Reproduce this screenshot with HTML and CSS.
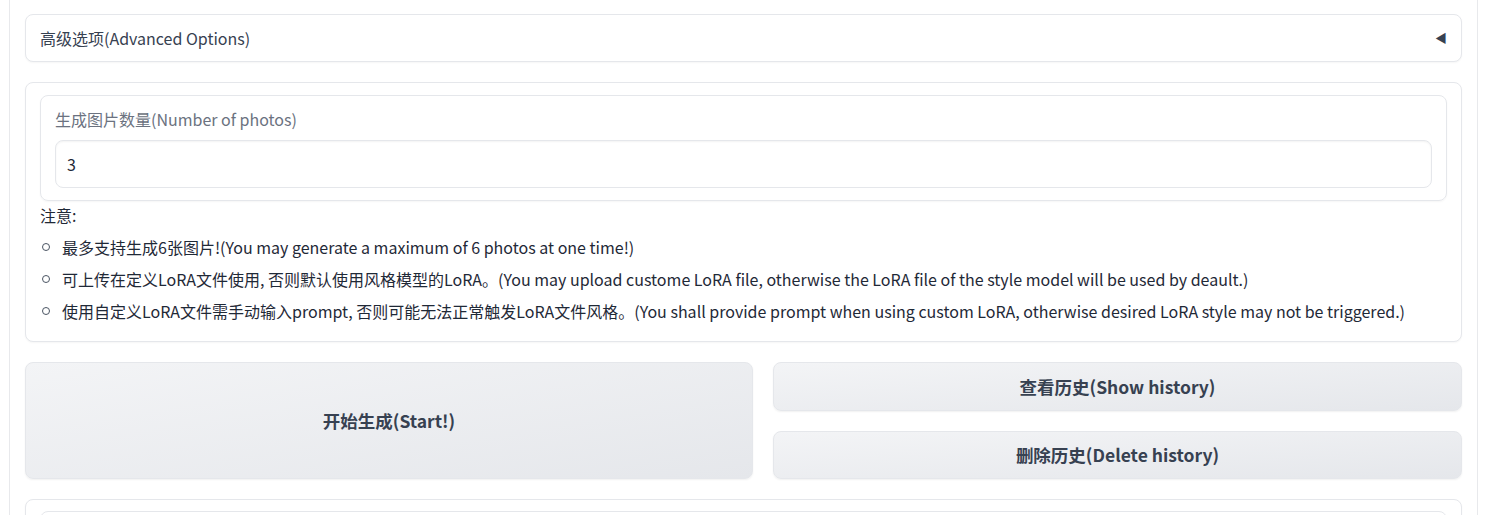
FILE: index.html
```html
<!DOCTYPE html>
<html lang="zh">
<head>
<meta charset="utf-8">
<title>Options</title>
<link rel="stylesheet" href="styles.css">
</head>
<body>
<div class="wrap">
  <div class="accordion">
    <span class="acc-title">高级选项(Advanced Options)</span>
    <span class="acc-arrow">◀</span>
  </div>

  <div class="panel">
    <div class="block">
      <div class="label">生成图片数量(Number of photos)</div>
      <div class="input">3</div>
    </div>
    <div class="prose">
      <p class="note">注意:</p>
      <ul class="notes">
        <li>最多支持生成6张图片!(You may generate a maximum of 6 photos at one time!)</li>
        <li>可上传在定义LoRA文件使用, 否则默认使用风格模型的LoRA。(You may upload custome LoRA file, otherwise the LoRA file of the style model will be used by deault.)</li>
        <li>使用自定义LoRA文件需手动输入prompt, 否则可能无法正常触发LoRA文件风格。(You shall provide prompt when using custom LoRA, otherwise desired LoRA style may not be triggered.)</li>
      </ul>
    </div>
  </div>

  <div class="actions">
    <button class="btn btn-start">开始生成(Start!)</button>
    <div class="side">
      <button class="btn">查看历史(Show history)</button>
      <button class="btn">删除历史(Delete history)</button>
    </div>
  </div>

  <div class="panel panel-next">
    <div class="block block-next"></div>
  </div>
</div>
</body>
</html>
```

FILE: styles.css
```css
* { box-sizing: border-box; }

html, body {
  margin: 0;
  padding: 0;
  background: #ffffff;
  height: 515px;
  overflow: hidden;
}

body {
  font-family: "Noto Sans CJK SC", "Noto Sans", sans-serif;
  font-size: 16px;
  color: #374151;
}

.wrap {
  margin-left: 9px;
  width: 1469px;
  min-height: 700px;
  border-left: 1px solid #e8e9ec;
  border-right: 1px solid #e8e9ec;
  padding: 14px 15px 0 15px;
  display: flex;
  flex-direction: column;
  gap: 20px;
}

.accordion {
  height: 48px;
  border: 1px solid #e5e7eb;
  border-radius: 8px;
  box-shadow: 0 1px 2px rgba(0,0,0,0.04);
  display: flex;
  align-items: center;
  justify-content: space-between;
  padding: 0 14px 0 14px;
  background: #fff;
}

.acc-title {
  font-size: 16px;
  color: #374151;
}

.acc-arrow {
  font-size: 12px;
  color: #374151;
  line-height: 1;
}

.panel {
  border: 1px solid #e5e7eb;
  border-radius: 8px;
  box-shadow: 0 1px 2px rgba(0,0,0,0.04);
  padding: 12px 14px 12px 14px;
  background: #fff;
}

.block {
  border: 1px solid #e5e7eb;
  border-radius: 8px;
  box-shadow: 0 1px 2px rgba(0,0,0,0.04);
  padding: 12px 14px 12px 14px;
  display: flex;
  flex-direction: column;
  gap: 10px;
}

.label {
  line-height: 22px;
  color: #6b7280;
  font-size: 16px;
}

.input {
  height: 48px;
  border: 1px solid #e5e7eb;
  border-radius: 8px;
  box-shadow: inset 0 1px 2px rgba(0,0,0,0.05);
  padding: 0 11px;
  display: flex;
  align-items: center;
  color: #1f2937;
  font-size: 16px;
}

.prose {
  padding-top: 2px;
}

.note {
  margin: 0;
  line-height: 24px;
  color: #1f2937;
}

.notes {
  list-style: none;
  margin: 4px 0 2px 0;
  padding: 0;
}

.notes li {
  line-height: 32px;
  color: #1f2937;
  display: flex;
  align-items: center;
  gap: 12px;
}

.notes li::before {
  content: "";
  width: 6px;
  height: 6px;
  border: 1px solid #4b5563;
  border-radius: 50%;
  margin-left: 2px;
  flex: none;
}

.actions {
  display: grid;
  grid-template-columns: 728fr 689fr;
  gap: 20px;
  height: 117px;
}

.side {
  display: grid;
  grid-template-rows: 1fr 1fr;
  gap: 20px;
}

.btn {
  font-family: "Noto Sans CJK SC", "Noto Sans", sans-serif;
  font-size: 17.5px;
  font-weight: 700;
  color: #374151;
  background: linear-gradient(to bottom right, #f3f4f6, #e5e7eb);
  border: 1px solid #e5e7eb;
  border-radius: 8px;
  box-shadow: 0 1px 2px rgba(0,0,0,0.06);
  padding: 0;
  cursor: pointer;
}

.panel-next {
  height: 120px;
  padding-top: 11px;
}

.block-next {
  height: 100px;
}
```
